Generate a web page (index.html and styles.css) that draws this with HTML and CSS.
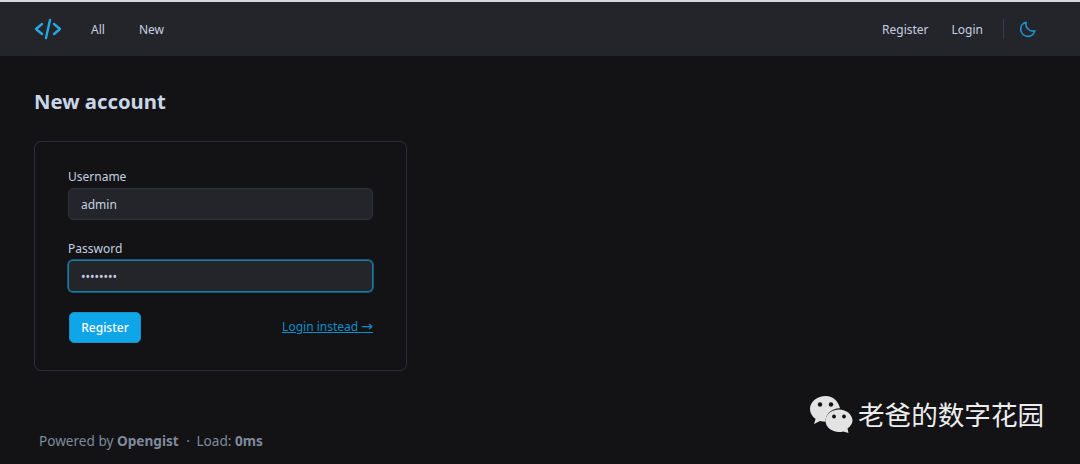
FILE: index.html
```html
<!DOCTYPE html>
<html>
<head>
    <meta charset="utf-8">
    <meta name="viewport" content="width=device-width, initial-scale=1">
    <title>New account</title>
    <link rel="stylesheet" href="styles.css">
</head>
<body>
    <div class="top-line"></div>

    <nav class="navbar">
        <div class="nav-left">
            <svg class="logo" width="28" height="22" viewBox="0 0 28 22" fill="none" stroke="currentColor" stroke-width="2.400" stroke-linecap="round" stroke-linejoin="round">
                <path d="M8 6 2 11l6 5"/>
                <path d="M16 2 12 20"/>
                <path d="M20 6l6 5-6 5"/>
            </svg>
            <a class="nav-link" href="#">All</a>
            <a class="nav-link" href="#">New</a>
        </div>
        <div class="nav-right">
            <a class="nav-link" href="#">Register</a>
            <a class="nav-link" href="#">Login</a>
            <span class="nav-divider"></span>
            <svg class="moon" width="18" height="18" viewBox="0 0 24 24" fill="none" stroke="currentColor" stroke-width="2.300" stroke-linecap="round" stroke-linejoin="round">
                <path d="M21 14.500A9.500 9.500 0 0 1 9.500 3a9.500 9.500 0 1 0 11.500 11.500z"/>
            </svg>
        </div>
    </nav>

    <main class="content">
        <h1 class="page-title">New account</h1>

        <form class="card">
            <label class="field-label" for="username">Username</label>
            <input class="field" id="username" type="text" value="admin">

            <label class="field-label second" for="password">Password</label>
            <input class="field focused" id="password" type="password" value="12345678">

            <div class="form-actions">
                <button class="btn" type="button">Register</button>
                <a class="login-link" href="#">Login instead <span class="arrow">→</span></a>
            </div>
        </form>
    </main>

    <footer class="footer">
        Powered by <b>Opengist</b> <span class="dot">·</span> Load: <b>0ms</b>
    </footer>

    <!-- watermark sits over the page -->
    <div class="watermark">
        <svg width="44" height="38" viewBox="0 0 44 38">
            <path fill="#e3e3e3" d="M17 1C8 1 1 6.800 1 14c0 4 2.200 7.500 5.600 9.900L5 29l6-3c1.800.5 3.500.8 5.500.8C16 20 22 13.500 31 13.300 29.500 6.300 23.900 1 17 1z"/>
            <path fill="#e3e3e3" d="M30 14.500c-7.400 0-13.500 5-13.500 11.300S22.600 37 30 37c1.500 0 3-.2 4.300-.6L39.500 38l-1-4.600c3-2 5-4.900 5-7.600 0-6.300-6-11.300-13.500-11.300z"/>
            <circle cx="11" cy="9.500" r="2.200" fill="#131316"/>
            <circle cx="22" cy="9.500" r="2.200" fill="#131316"/>
            <circle cx="25" cy="21.500" r="1.900" fill="#131316"/>
            <circle cx="35" cy="21.500" r="1.900" fill="#131316"/>
        </svg>
        <span class="watermark-text">老爸的数字花园</span>
    </div>
</body>
</html>
```

FILE: styles.css
```css
body {
    background-color: #131316;
    color: #cbd5e1;
    font-family: "Noto Sans", "Open Sans", sans-serif;
    font-size: 12px;
    margin: 0;
    height: 464px;
    overflow: hidden;
    position: relative;
}
a {
    text-decoration: none;
}
.top-line {
    height: 2px;
    background-color: #d8d8d8;
}
.navbar {
    height: 54px;
    background-color: #24252b;
    display: flex;
    align-items: center;
    justify-content: space-between;
    padding: 0 43px 0 34px;
}
.nav-left, .nav-right {
    display: flex;
    align-items: center;
}
.logo {
    color: #28a8e0;
    margin-right: 29px;
}
.nav-left .nav-link {
    margin-right: 34px;
}
.nav-right .nav-link {
    margin-left: 23px;
}
.nav-link {
    color: #c4d0e0;
}
.nav-divider {
    width: 1px;
    height: 20px;
    background-color: #3a3b42;
    margin: 0 15px 0 20px;
}
.moon {
    color: #1d90cc;
}
.content {
    padding: 0 34px;
}
.page-title {
    color: #c9d6e8;
    font-size: 20.300px;
    font-weight: 700;
    line-height: 28px;
    margin: 31px 0 26px;
}
.card {
    width: 373px;
    height: 230px;
    box-sizing: border-box;
    border: 1px solid #2e2f36;
    border-radius: 7px;
    padding: 25px 33px;
    display: flex;
    flex-direction: column;
}
.field-label {
    line-height: 20px;
    color: #c4d0e0;
    margin-bottom: 1px;
}
.field-label.second {
    margin-top: 19px;
}
.field {
    height: 32px;
    box-sizing: border-box;
    width: 100%;
    background-color: #24252b;
    border: 1px solid #30313a;
    border-radius: 5px;
    color: #c4d0e0;
    font-family: inherit;
    font-size: 12px;
    padding: 0 12px;
    outline: none;
}
.field.focused {
    border-color: #1a7ba8;
    box-shadow: 0 0 0 1px #16597a;
}
.form-actions {
    display: flex;
    align-items: center;
    justify-content: space-between;
    margin-top: 20px;
    padding-left: 1px;
}
.btn {
    width: 72px;
    height: 31px;
    background-color: #0ea5e9;
    border: 1px solid #1f8fc4;
    border-radius: 5px;
    color: #fff;
    font-family: inherit;
    font-size: 12px;
    font-weight: 500;
    padding: 0;
}
.login-link {
    color: #0d8fca;
    text-decoration: underline;
    margin-bottom: 2px;
}
.arrow {
    font-family: "DejaVu Sans", sans-serif;
    font-size: 14px;
    line-height: 12px;
}
.footer {
    position: absolute;
    left: 39px;
    top: 431px;
    line-height: 20px;
    font-size: 13.600px;
    color: #7f8a9c;
}
.footer .dot {
    margin: 0 3px 0 4px;
}
.watermark {
    position: absolute;
    left: 809px;
    top: 395px;
    display: flex;
    align-items: center;
    gap: 5px;
}
.watermark-text {
    color: #ededed;
    font-family: "Noto Sans CJK SC", sans-serif;
    font-size: 26.600px;
    line-height: 38px;
}
```
